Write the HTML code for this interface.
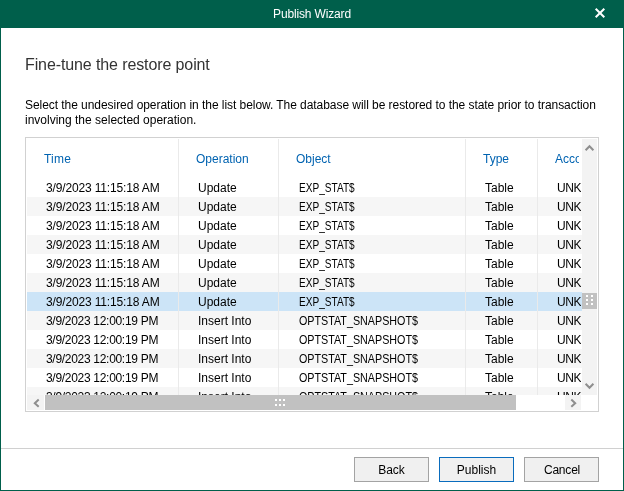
<!DOCTYPE html>
<html>
<head>
<meta charset="utf-8">
<title>Publish Wizard</title>
<style>
html,body{margin:0;padding:0;}
body{width:624px;height:491px;position:relative;overflow:hidden;background:#fff;font-family:"Liberation Sans",sans-serif;font-size:12px;color:#000;}
#root{position:absolute;left:0;top:0;width:624px;height:491px;will-change:transform;}
.abs{position:absolute;}
#titlebar{left:0;top:0;width:624px;height:28px;background:#005f4b;}
#title{left:0;top:0;width:624px;height:28px;line-height:28px;text-align:center;color:#fff;font-size:12px;letter-spacing:-0.15px;}
#bl{left:0;top:0;width:1px;height:491px;background:#005f4b;}
#br{left:623px;top:0;width:1px;height:491px;background:#005f4b;}
#bb{left:0;top:490px;width:624px;height:1px;background:#005f4b;}
#heading{left:25px;top:54px;font-size:16px;line-height:22px;color:#333;white-space:nowrap;letter-spacing:-0.11px;}
.para{left:25px;white-space:nowrap;line-height:16px;height:16px;color:#000;}
#box{left:25px;top:137px;width:572px;height:273px;border:1px solid #d1d1d1;background:#fff;}
#grid{left:27px;top:139px;width:555px;height:256px;overflow:hidden;}
.row{position:absolute;left:0;width:555px;height:19px;line-height:19px;white-space:nowrap;}
.row span{position:absolute;top:1px;}
.c1{left:19px;letter-spacing:-0.15px;}
.c2{left:171px;}
.c3{left:272px;}
.c4{left:458px;}
.c5{left:530px;width:23.5px;overflow:hidden;letter-spacing:-0.4px;}
.pm{letter-spacing:-0.3px;}
.oa{transform:scaleX(0.84);transform-origin:0 50%;}
.ob{transform:scaleX(0.895);transform-origin:0 50%;}
.alt{background:#f6f6f6;}
.sel{background:#cce4f7;}
.hd{position:absolute;top:1px;height:39px;line-height:39px;color:#0063b1;white-space:nowrap;}
.sep{position:absolute;top:0;width:1px;height:256px;background:#eaeaea;}
.btn{top:457px;width:73px;height:23px;line-height:25px;border:1px solid #a3a3a3;background:#f0f0f0;text-align:center;font-size:12px;}
#footline{left:1px;top:448px;width:622px;height:1px;background:#d0d0d0;}
#vtrack{left:582px;top:139px;width:15px;height:256px;background:#f3f3f3;}
#vthumb{left:582px;top:293px;width:15px;height:16px;background:#c1c1c1;}
#hthumb{left:45px;top:395px;width:471px;height:15px;background:#c1c1c1;}
.hbtn{top:395px;height:15px;background:#f3f3f3;}
.dot{position:absolute;width:2px;height:2px;background:#fff;}
</style>
</head>
<body>
<div id="root">
<div class="abs" id="titlebar"></div>
<div class="abs" id="title">Publish Wizard</div>
<svg class="abs" style="left:594px;top:7px" width="12" height="12" viewBox="0 0 12 12"><path d="M1.7 1.7 L10.3 10.3 M10.3 1.7 L1.7 10.3" stroke="#fff" stroke-width="2" fill="none"/></svg>
<div class="abs" id="bl"></div><div class="abs" id="br"></div><div class="abs" id="bb"></div>

<div class="abs" id="heading">Fine-tune the restore point</div>
<div class="abs para" style="top:97px;letter-spacing:-0.053px">Select the undesired operation in the list below. The database will be restored to the state prior to transaction</div>
<div class="abs para" style="top:112px">involving the selected operation.</div>

<div class="abs" id="box"></div>
<div class="abs" id="grid">
  <div class="hd" style="left:17px;letter-spacing:0.2px">Time</div>
  <div class="hd" style="left:169px">Operation</div>
  <div class="hd" style="left:269px">Object</div>
  <div class="hd" style="left:456px">Type</div>
  <div class="hd" style="left:528px;width:24px;overflow:hidden">Account</div>

  <div class="row" style="top:39px"><span class="c1">3/9/2023 11:15:18 AM</span><span class="c2">Update</span><span class="c3 oa">EXP_STAT$</span><span class="c4">Table</span><span class="c5">UNKNOWN</span></div>
  <div class="row alt" style="top:58px"><span class="c1">3/9/2023 11:15:18 AM</span><span class="c2">Update</span><span class="c3 oa">EXP_STAT$</span><span class="c4">Table</span><span class="c5">UNKNOWN</span></div>
  <div class="row" style="top:77px"><span class="c1">3/9/2023 11:15:18 AM</span><span class="c2">Update</span><span class="c3 oa">EXP_STAT$</span><span class="c4">Table</span><span class="c5">UNKNOWN</span></div>
  <div class="row alt" style="top:96px"><span class="c1">3/9/2023 11:15:18 AM</span><span class="c2">Update</span><span class="c3 oa">EXP_STAT$</span><span class="c4">Table</span><span class="c5">UNKNOWN</span></div>
  <div class="row" style="top:115px"><span class="c1">3/9/2023 11:15:18 AM</span><span class="c2">Update</span><span class="c3 oa">EXP_STAT$</span><span class="c4">Table</span><span class="c5">UNKNOWN</span></div>
  <div class="row alt" style="top:134px"><span class="c1">3/9/2023 11:15:18 AM</span><span class="c2">Update</span><span class="c3 oa">EXP_STAT$</span><span class="c4">Table</span><span class="c5">UNKNOWN</span></div>
  <div class="row sel" style="top:153px"><span class="c1">3/9/2023 11:15:18 AM</span><span class="c2">Update</span><span class="c3 oa">EXP_STAT$</span><span class="c4">Table</span><span class="c5">UNKNOWN</span></div>
  <div class="row alt" style="top:172px"><span class="c1 pm">3/9/2023 12:00:19 PM</span><span class="c2">Insert Into</span><span class="c3 ob">OPTSTAT_SNAPSHOT$</span><span class="c4">Table</span><span class="c5">UNKNOWN</span></div>
  <div class="row" style="top:191px"><span class="c1 pm">3/9/2023 12:00:19 PM</span><span class="c2">Insert Into</span><span class="c3 ob">OPTSTAT_SNAPSHOT$</span><span class="c4">Table</span><span class="c5">UNKNOWN</span></div>
  <div class="row alt" style="top:210px"><span class="c1 pm">3/9/2023 12:00:19 PM</span><span class="c2">Insert Into</span><span class="c3 ob">OPTSTAT_SNAPSHOT$</span><span class="c4">Table</span><span class="c5">UNKNOWN</span></div>
  <div class="row" style="top:229px"><span class="c1 pm">3/9/2023 12:00:19 PM</span><span class="c2">Insert Into</span><span class="c3 ob">OPTSTAT_SNAPSHOT$</span><span class="c4">Table</span><span class="c5">UNKNOWN</span></div>
  <div class="row alt" style="top:248px"><span class="c1 pm">3/9/2023 12:00:19 PM</span><span class="c2">Insert Into</span><span class="c3 ob">OPTSTAT_SNAPSHOT$</span><span class="c4">Table</span><span class="c5">UNKNOWN</span></div>

  <div class="sep" style="left:151px"></div>
  <div class="sep" style="left:251px"></div>
  <div class="sep" style="left:438px"></div>
  <div class="sep" style="left:510px"></div>
</div>

<div class="abs" id="vtrack"></div>
<svg class="abs" style="left:582px;top:139px" width="15" height="256" viewBox="0 0 15 256">
  <path d="M3.6 11.3 L7.5 7.3 L11.4 11.3" stroke="#8e8e8e" stroke-width="2" fill="none"/>
  <path d="M3.6 244.7 L7.5 248.7 L11.4 244.7" stroke="#8e8e8e" stroke-width="2" fill="none"/>
</svg>
<div class="abs" id="vthumb">
  <div class="dot" style="left:4px;top:2px"></div><div class="dot" style="left:9px;top:2px"></div>
  <div class="dot" style="left:4px;top:6px"></div><div class="dot" style="left:9px;top:6px"></div>
  <div class="dot" style="left:4px;top:10px"></div><div class="dot" style="left:9px;top:10px"></div>
</div>

<div class="abs hbtn" style="left:27px;width:17px"></div>
<div class="abs hbtn" style="left:565px;width:16px"></div>
<svg class="abs" style="left:27px;top:395px" width="555" height="15" viewBox="0 0 555 15">
  <path d="M11.7 4.6 L7.8 8.2 L11.7 11.8" stroke="#8e8e8e" stroke-width="2" fill="none"/>
  <path d="M544.3 4.6 L548.2 8.2 L544.3 11.8" stroke="#8e8e8e" stroke-width="2" fill="none"/>
</svg>
<div class="abs" id="hthumb">
  <div class="dot" style="left:230px;top:4px"></div><div class="dot" style="left:234px;top:4px"></div><div class="dot" style="left:238px;top:4px"></div>
  <div class="dot" style="left:230px;top:9px"></div><div class="dot" style="left:234px;top:9px"></div><div class="dot" style="left:238px;top:9px"></div>
</div>

<div class="abs" id="footline"></div>
<div class="abs btn" style="left:354px">Back</div>
<div class="abs btn" style="left:439px;border-color:#0a6cbd;">Publish</div>
<div class="abs btn" style="left:524px;letter-spacing:-0.2px;text-indent:1px">Cancel</div>
</div>
</body>
</html>
